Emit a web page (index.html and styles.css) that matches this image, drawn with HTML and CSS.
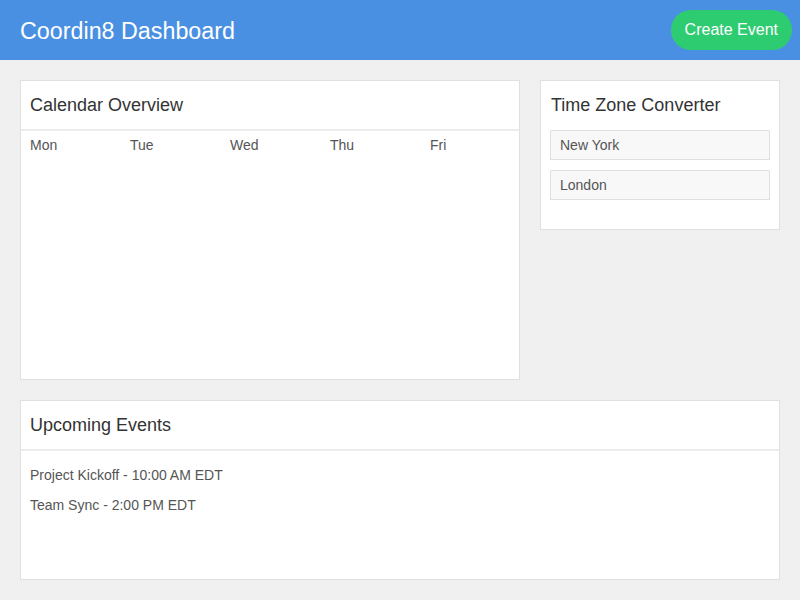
FILE: index.html
```html
<!DOCTYPE html>
<html>
<head>
<meta charset="utf-8">
<link rel="stylesheet" href="styles.css">
</head>
<body>
<header class="topbar">
  <h1 class="brand">Coordin8 Dashboard</h1>
  <button class="create-btn">Create Event</button>
</header>
<main class="content">
  <div class="row">
    <section class="card calendar">
      <div class="card-head">Calendar Overview</div>
      <div class="days">
        <span>Mon</span><span>Tue</span><span>Wed</span><span>Thu</span><span>Fri</span>
      </div>
    </section>
    <section class="card tz">
      <div class="tz-head">Time Zone Converter</div>
      <div class="tz-field">New York</div>
      <div class="tz-field">London</div>
    </section>
  </div>
  <section class="card events">
    <div class="card-head">Upcoming Events</div>
    <ul class="event-list">
      <li>Project Kickoff - 10:00 AM EDT</li>
      <li>Team Sync - 2:00 PM EDT</li>
    </ul>
  </section>
</main>
</body>
</html>
```

FILE: styles.css
```css
* { box-sizing: border-box; }
html, body { margin: 0; padding: 0; }
body {
  background: #f0f0f0;
  font-family: "Liberation Sans", Arial, Helvetica, sans-serif;
  color: #333;
}
.topbar {
  height: 60px;
  background: #4a90e2;
  display: flex;
  align-items: center;
  justify-content: space-between;
  padding: 0 8px 0 20px;
}
.brand {
  margin: 0;
  padding-top: 3px;
  font-size: 23.3px;
  font-weight: normal;
  color: #fff;
}
.create-btn {
  height: 40px;
  padding: 0 14px;
  white-space: nowrap;
  border: none;
  border-radius: 20px;
  background: #2ecc71;
  color: #fff;
  font-family: inherit;
  font-size: 16px;
}
.content {
  padding: 20px;
  display: flex;
  flex-direction: column;
  gap: 20px;
}
.row {
  display: flex;
  gap: 20px;
  align-items: flex-start;
}
.card {
  background: #fff;
  border: 1px solid #e0e0e0;
}
.card-head {
  height: 50px;
  padding: 0 9px;
  display: flex;
  align-items: center;
  font-size: 18px;
  color: #333;
  border-bottom: 2px solid #ececec;
}
.calendar {
  width: 500px;
  height: 300px;
}
.days {
  display: grid;
  grid-template-columns: repeat(5, 100px);
  padding: 6px 9px;
  font-size: 14px;
  color: #555;
}
.tz {
  width: 240px;
  padding: 0 9px 29px;
}
.tz-head {
  height: 49px;
  display: flex;
  align-items: center;
  padding-left: 1px;
  font-size: 18px;
  color: #333;
}
.tz-field {
  height: 30px;
  margin-bottom: 10px;
  padding: 0 9px;
  display: flex;
  align-items: center;
  background: #f8f8f8;
  border: 1px solid #e0e0e0;
  font-size: 14px;
  color: #555;
}
.tz-field:last-child { margin-bottom: 0; }
.events {
  height: 180px;
}
.event-list {
  list-style: none;
  margin: 0;
  padding: 9px 9px;
}
.event-list li {
  height: 30px;
  line-height: 30px;
  font-size: 14px;
  color: #555;
}
```
